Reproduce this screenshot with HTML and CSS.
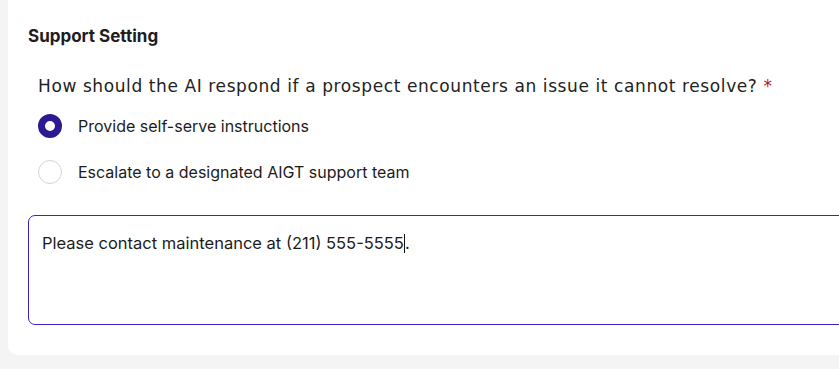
FILE: index.html
```html
<!DOCTYPE html>
<html>
<head>
<meta charset="utf-8">
<link rel="stylesheet" href="styles.css">
</head>
<body>
<div class="card">
  <h2 class="title">Support Setting</h2>
  <div class="question">
    <p class="q-label">How should the AI respond if a prospect encounters an issue it cannot resolve? <span class="req">*</span></p>
    <div class="options">
      <label class="option"><span class="radio checked"></span><span class="opt-text">Provide self-serve instructions</span></label>
      <label class="option"><span class="radio"></span><span class="opt-text">Escalate to a designated AIGT support team</span></label>
    </div>
  </div>
  <div class="textbox"><span>Please contact maintenance at (211) 555-5555</span><span class="caret"></span><span>.</span></div>
</div>
</body>
</html>
```
FILE: styles.css
```css
html, body {
  margin: 0;
  padding: 0;
  background: #f4f4f4;
  overflow: hidden;
  height: 369px;
}
.card {
  margin-left: 8px;
  width: 900px;
  height: 355px;
  box-sizing: border-box;
  background: #ffffff;
  border-radius: 0 0 10px 10px;
  padding: 26px 0 0 20px;
  font-family: Inter, "Liberation Sans", sans-serif;
  color: #1a1a1a;
}
.title {
  margin: 0;
  font-size: 17px;
  font-weight: 700;
  line-height: 20px;
  color: #1d1d1f;
}
.question {
  padding-left: 10px;
  margin-top: 29px;
}
.q-label {
  margin: 0;
  font-family: "DejaVu Sans", "Open Sans", sans-serif;
  font-size: 17px;
  line-height: 22px;
  letter-spacing: 0.6px;
  color: #232323;
  font-weight: 400;
}
.req {
  color: #c0121b;
}
.options {
  display: flex;
  flex-direction: column;
  gap: 22px;
  margin-top: 17px;
}
.option {
  display: flex;
  align-items: center;
  gap: 16px;
  height: 24px;
}
.radio {
  width: 24px;
  height: 24px;
  box-sizing: border-box;
  border-radius: 50%;
  border: 1px solid #d0d5dd;
  background: #fff;
}
.radio.checked {
  border: 7px solid #2b1a91;
}
.opt-text {
  font-size: 16px;
  color: #1c1c1c;
}
.textbox {
  margin-top: 31px;
  height: 110px;
  box-sizing: border-box;
  border: 1.5px solid #3b24c9;
  border-radius: 7px;
  padding: 16px 13px;
  font-size: 16.5px;
  line-height: 22px;
  color: #1c1c1c;
}
.caret {
  display: inline-block;
  width: 1px;
  height: 19px;
  background: #111;
  vertical-align: -4px;
}
```
